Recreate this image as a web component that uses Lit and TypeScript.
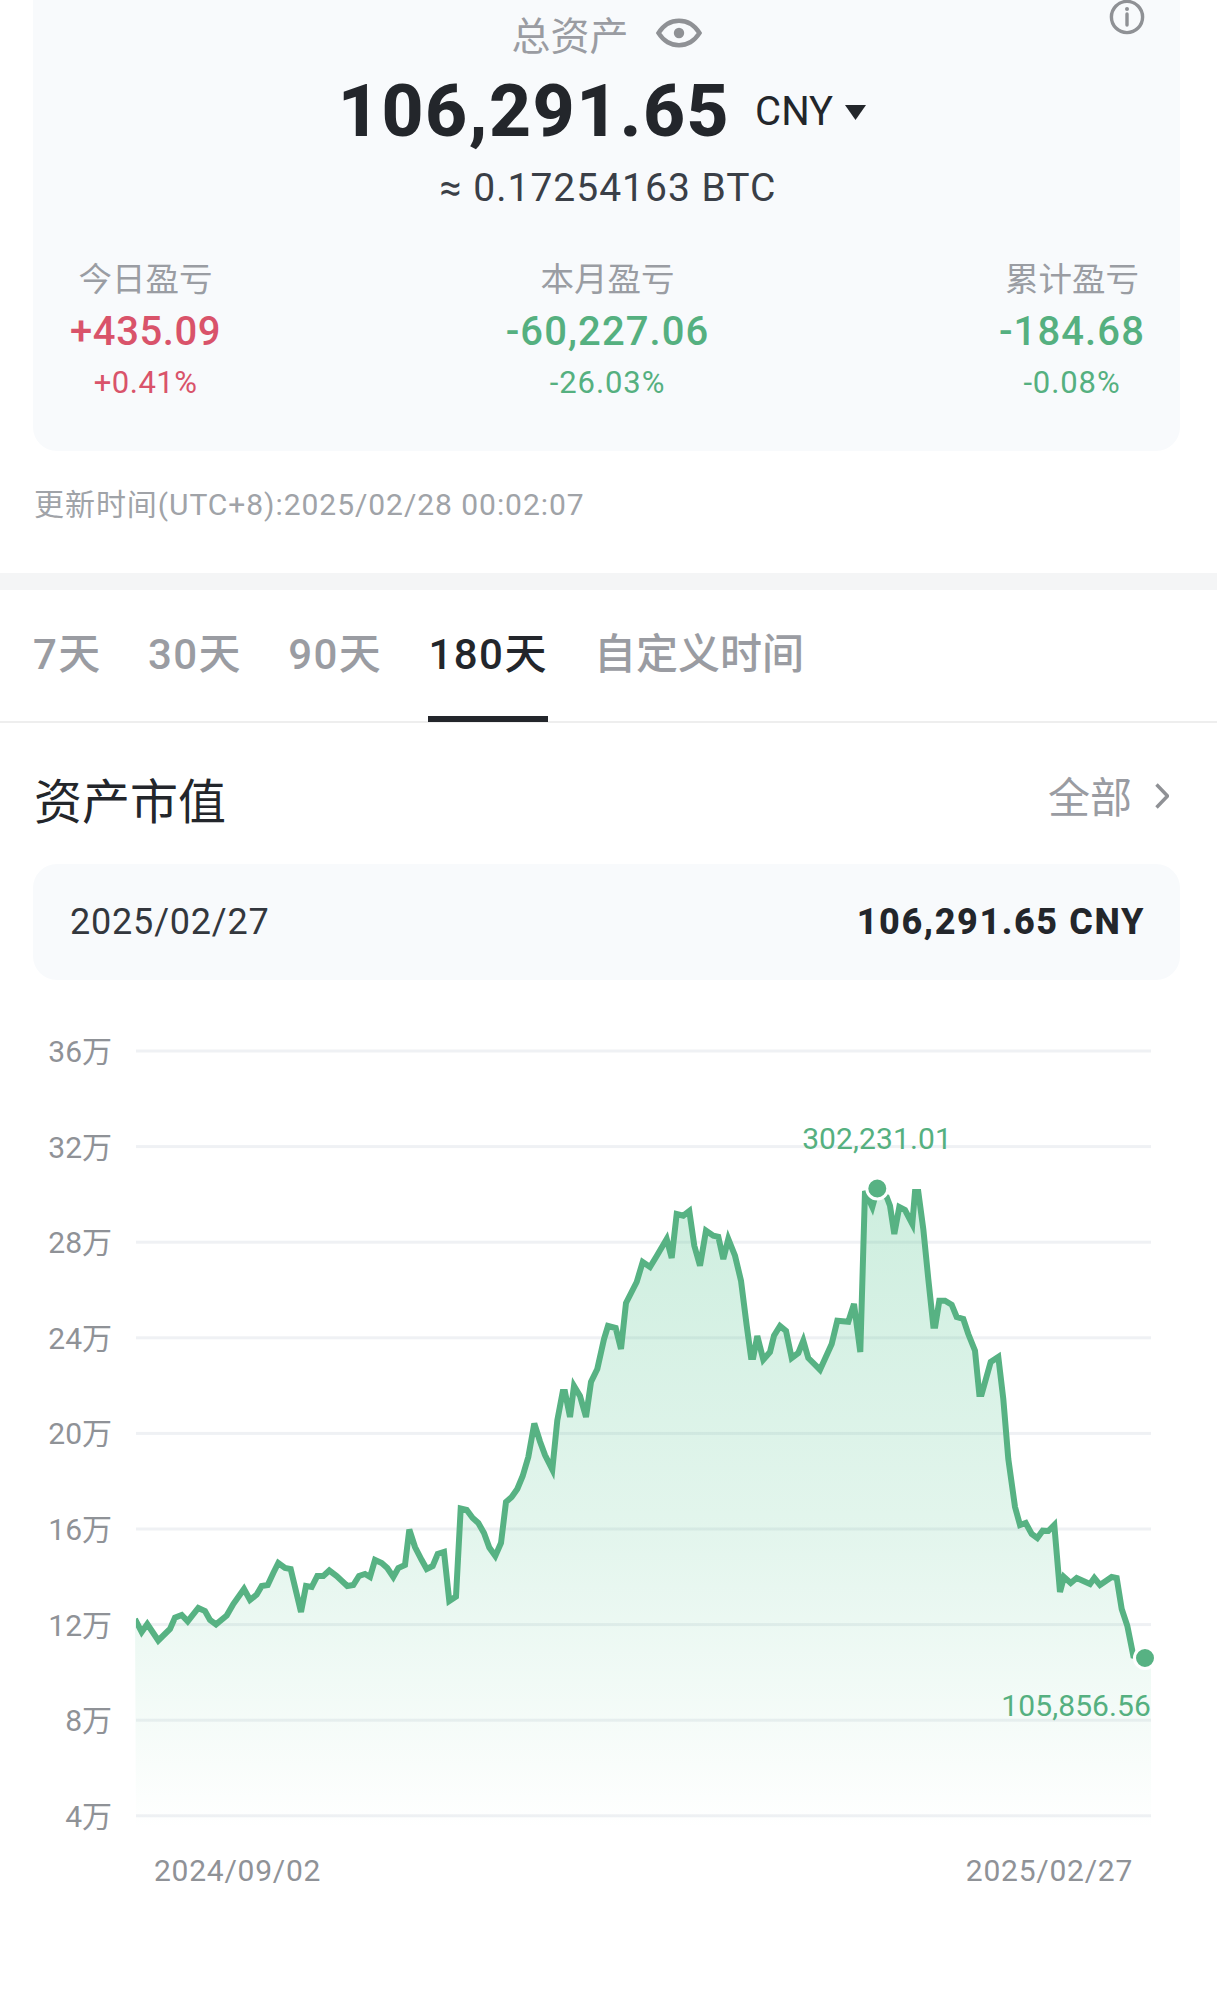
import { LitElement, html, css, svg } from 'lit';
import { customElement } from 'lit/decorators.js';
import { classMap } from 'lit/directives/class-map.js';

// chart points, in page pixels
const POINTS: [number, number][] = [
    [135, 1620], [141.7, 1633], [147.3, 1625], [158.3, 1641.5], [170, 1630], [175, 1618.6], [181.7, 1616], [187.7, 1622.4],
    [198.3, 1609], [205, 1612], [210, 1621], [216, 1625.4], [226.7, 1616.6], [233.3, 1605], [244, 1590], [250, 1601],
    [256.7, 1595.6], [261.7, 1587], [267.7, 1586], [273.3, 1574], [278.3, 1564], [285, 1569], [290.7, 1570], [301, 1613],
    [306, 1587], [311.7, 1588], [317.3, 1577], [323.3, 1577], [329.3, 1571.5], [336.7, 1577], [347.3, 1587], [353.3, 1586],
    [359, 1577], [365, 1575], [370, 1578], [375, 1561], [381.7, 1564], [387.3, 1569], [393.3, 1578], [398.3, 1569],
    [405, 1566], [409.3, 1530.5], [415, 1548], [421.7, 1561], [426.7, 1570], [432.7, 1567], [437.7, 1555], [444, 1553],
    [449.3, 1602], [456, 1597.5], [460.7, 1509.5], [466.7, 1511], [472.7, 1519], [478.3, 1524], [484, 1534], [489.3, 1548.5],
    [495.3, 1557], [501, 1544], [506, 1503], [511.7, 1498], [517.3, 1490], [522.7, 1477], [528.3, 1458], [534.3, 1424.5],
    [540, 1442.5], [545, 1456], [552.3, 1470.5], [557.3, 1421.5], [562.7, 1393], [565, 1393], [570, 1418], [574, 1387],
    [580, 1397], [586, 1418], [591, 1383], [597.3, 1370], [604, 1340], [608, 1327], [615.7, 1329], [621, 1350],
    [626, 1304], [636.7, 1283], [642.7, 1263], [650, 1268], [656.7, 1257], [666.7, 1240], [671.7, 1259], [676.7, 1215],
    [683.3, 1216.7], [689.3, 1212], [694.3, 1246.7], [700, 1266.7], [706, 1231.7], [713.3, 1236.7], [718.3, 1237.7], [723.3, 1260],
    [728.3, 1240], [735, 1256.7], [741, 1281.7], [746.7, 1326.7], [751, 1358], [753.3, 1358], [757.3, 1337], [763.3, 1360.7],
    [770, 1353], [774, 1336.7], [780, 1327], [786, 1332], [791.7, 1359], [798.3, 1354], [803.3, 1341.7], [808.3, 1359],
    [820, 1370.7], [831.7, 1345], [837.3, 1321.7], [848.3, 1322.7], [854, 1305], [860.3, 1353], [865, 1192], [872.3, 1208],
    [877.3, 1190], [886.7, 1198], [890, 1206.7], [894.3, 1235], [899.3, 1208], [905, 1211], [912.3, 1225], [915, 1193],
    [918.3, 1193], [923.3, 1230], [928.3, 1280], [933.3, 1326.7], [935.3, 1326.7], [939.3, 1301.7], [945, 1301.7], [951.7, 1305.7],
    [956.7, 1318], [963.3, 1320], [968.3, 1335], [975, 1351.7], [979.3, 1395], [981.7, 1395], [990.7, 1363], [998.3, 1358],
    [1003.3, 1400], [1008.3, 1460], [1015, 1508], [1020, 1526], [1025.7, 1524], [1031.7, 1535], [1037.3, 1539], [1042.7, 1531.7],
    [1048.3, 1532], [1054.3, 1526], [1060, 1593], [1064, 1578], [1070.7, 1584], [1076.7, 1579], [1090, 1585], [1094.3, 1579],
    [1100, 1586], [1111.7, 1578], [1116.7, 1579], [1121.7, 1610], [1127.3, 1626.7], [1133.3, 1656.7], [1145, 1659],
];

const GRID = ['36万', '32万', '28万', '24万', '20万', '16万', '12万', '8万', '4万'];
const GRID_TOP = 1052;
const GRID_STEP = 95.6;

const STATS = [
    { label: '今日盈亏', value: '+435.09', pct: '+0.41%', up: true },
    { label: '本月盈亏', value: '-60,227.06', pct: '-26.03%', up: false },
    { label: '累计盈亏', value: '-184.68', pct: '-0.08%', up: false },
];

const TABS = ['7天', '30天', '90天', '180天', '自定义时间'];

@customElement('app-root')
export class AppRoot extends LitElement {
    static get styles () {
        return css`
            :host {
                display: block;
                width: 1217px;
                height: 1994px;
                overflow: hidden;
                background: #fff;
                font-family: Roboto, "Noto Sans CJK SC", sans-serif;
                color: #23262b;
            }
            .summary {
                position: relative;
                height: 451px;
                margin: 0 37px 0 33px;
                padding-top: 8px;
                box-sizing: border-box;
                background: #f8fafc;
                border-radius: 0 0 24px 24px;
            }
            .info {
                position: absolute;
                top: -1px;
                right: 35px;
                width: 36px;
                height: 36px;
            }
            .total-label {
                display: flex;
                justify-content: center;
                align-items: center;
                gap: 27px;
                height: 50px;
                font-size: 39px;
                color: #9a9ca2;
            }
            .total-label svg {
                width: 46px;
                height: 30px;
            }
            .amount {
                display: flex;
                justify-content: center;
                align-items: center;
                height: 84px;
                margin-top: 11px;
                padding-right: 9px;
            }
            .amount b {
                font-size: 73px;
                font-weight: 800;
                letter-spacing: 1.5px;
                line-height: 84px;
            }
            .amount span {
                margin-left: 25px;
                font-size: 40px;
            }
            .amount svg {
                width: 21px;
                height: 15px;
                margin: 2px 0 0 12px;
            }
            .btc {
                margin-top: 10px;
                padding-left: 3px;
                height: 50px;
                line-height: 50px;
                text-align: center;
                font-size: 39px;
                letter-spacing: 1px;
                color: #3a3f47;
            }
            .stats {
                display: grid;
                grid-template-columns: auto 1fr auto;
                margin-top: 45px;
                padding: 0 35px 0 37px;
                text-align: center;
            }
            .stats > :nth-child(2) {
                padding-right: 5px;
            }
            .stat-label {
                height: 44px;
                line-height: 44px;
                font-size: 33.5px;
                color: #9a9da3;
            }
            .stat-value {
                height: 50px;
                line-height: 50px;
                margin-top: 5px;
                font-size: 40px;
                font-weight: 500;
                letter-spacing: 0.6px;
            }
            .stat-value.down {
                letter-spacing: 1.1px;
            }
            .stat-pct {
                height: 40px;
                line-height: 40px;
                margin-top: 6px;
                font-size: 31px;
                letter-spacing: 0.5px;
            }
            .stat-pct.down {
                letter-spacing: 0.9px;
            }
            .up { color: #d9536a; }
            .down { color: #55b080; }
            .updated {
                height: 122px;
                padding: 34px 0 0 34px;
                box-sizing: border-box;
                line-height: 40px;
                font-size: 30px;
                letter-spacing: 0.95px;
                color: #a0a3a8;
            }
            .band {
                height: 17px;
                background: #f4f5f6;
            }
            .tabs {
                display: flex;
                gap: 46px;
                padding: 0 33px;
                border-bottom: 2px solid #eeeeee;
            }
            .tab {
                padding: 42px 0 38px;
                border-bottom: 6px solid transparent;
                margin-bottom: -1px;
                line-height: 46px;
                font-size: 42px;
                letter-spacing: 1.5px;
                font-weight: 500;
                color: #9a9ca2;
            }
            .tab.wide {
                letter-spacing: 0;
            }
            .tab.active {
                color: #23262b;
                border-bottom-color: #23262b;
            }
            .heading {
                display: flex;
                justify-content: space-between;
                margin-top: 48px;
                padding: 0 48px 0 34px;
                height: 62px;
            }
            .heading h2 {
                margin: 2px 0 0;
                font-size: 48px;
                font-weight: 400;
                line-height: 60px;
                color: #23262b;
            }
            .all {
                display: flex;
                align-items: center;
                gap: 23px;
                height: 50px;
                font-size: 42px;
                color: #9a9ca2;
            }
            .all span {
                margin-top: -4px;
            }
            .all svg {
                width: 14px;
                height: 28px;
            }
            .picked {
                display: flex;
                justify-content: space-between;
                align-items: center;
                height: 116px;
                margin: 31px 37px 0 33px;
                padding: 0 35px 0 37px;
                background: #f8fafc;
                border-radius: 24px;
                font-size: 36px;
                color: #33373d;
            }
            .picked b {
                font-weight: 800;
                letter-spacing: 1.6px;
                color: #23262b;
            }
            .picked span {
                letter-spacing: 0.8px;
            }
            .chart {
                display: block;
                width: 1217px;
                height: 1013px;
            }
            .axis {
                font-size: 30px;
                fill: #8f9297;
            }
            .date {
                font-size: 30px;
                letter-spacing: 0.75px;
                fill: #8f9297;
            }
            .mark {
                font-size: 30px;
                letter-spacing: 0.1px;
                fill: #55b080;
            }
        `;
    }

    renderChart () {
        const line = POINTS.map(([x, y]) => `${x},${y}`).join(' ');
        const area = `M136,1830 L${line.split(' ').join(' L')} L1151,1661 L1151,1830 Z`;
        return html`
            <svg class="chart" viewBox="0 981 1217 1013">
                <defs>
                    <linearGradient id="fade" gradientUnits="userSpaceOnUse" x1="0" y1="1190" x2="0" y2="1830">
                        <stop offset="0" stop-color="#48c088" stop-opacity="0.27"></stop>
                        <stop offset="0.55" stop-color="#48c088" stop-opacity="0.15"></stop>
                        <stop offset="1" stop-color="#48c088" stop-opacity="0"></stop>
                    </linearGradient>
                    <clipPath id="plot"><rect x="136" y="1100" width="1015" height="760"></rect></clipPath>
                </defs>
                ${GRID.map((label, i) => {
                    const y = GRID_TOP + i * GRID_STEP;
                    return svg`
                        <rect x="136" y=${y - 1.5} width="1015" height="3" fill="#eff1f4"></rect>
                        <text class="axis" x="112" y=${y + 11} text-anchor="end">${label}</text>
                    `;
                })}
                <path d=${area} fill="url(#fade)"></path>
                <polyline points=${line} fill="none" stroke="#57b283" stroke-width="6" stroke-linejoin="miter" clip-path="url(#plot)"></polyline>
                <circle cx="877.3" cy="1189.5" r="10.5" fill="#57b283" stroke="#fff" stroke-width="3"></circle>
                <circle cx="1145" cy="1659" r="10.5" fill="#57b283" stroke="#fff" stroke-width="3"></circle>
                <text class="mark" x="877" y="1150" text-anchor="middle">302,231.01</text>
                <text class="mark" x="1151" y="1717" text-anchor="end">105,856.56</text>
                <text class="date" x="154" y="1882">2024/09/02</text>
                <text class="date" x="1133" y="1882" text-anchor="end">2025/02/27</text>
            </svg>
        `;
    }

    render () {
        return html`
            <section class="summary">
                <svg class="info" viewBox="0 0 36 36" fill="none" stroke="#8f9195" stroke-width="3.4">
                    <circle cx="18" cy="18" r="15.6"></circle>
                    <path d="M18 15v11" stroke-linecap="round"></path>
                    <circle cx="18" cy="10" r="2" fill="#8f9195" stroke="none"></circle>
                </svg>
                <div class="total-label">
                    <span>总资产</span>
                    <svg viewBox="0 0 46 30" fill="none">
                        <path d="M2.5 15C8 6.5 15 2.8 23 2.8S38 6.5 43.5 15C38 23.5 31 27.2 23 27.2S8 23.5 2.5 15Z" stroke="#8f9195" stroke-width="4.4"></path>
                        <circle cx="23" cy="15" r="5.2" fill="#8f9195"></circle>
                    </svg>
                </div>
                <div class="amount">
                    <b>106,291.65</b>
                    <span>CNY</span>
                    <svg viewBox="0 0 21 15"><path d="M0 0H21L10.5 15Z" fill="#23262b"></path></svg>
                </div>
                <div class="btc">≈ 0.17254163 BTC</div>
                <div class="stats">
                    ${STATS.map(s => html`
                        <div>
                            <div class="stat-label">${s.label}</div>
                            <div class="stat-value ${s.up ? 'up' : 'down'}">${s.value}</div>
                            <div class="stat-pct ${s.up ? 'up' : 'down'}">${s.pct}</div>
                        </div>
                    `)}
                </div>
            </section>
            <div class="updated">更新时间(UTC+8):2025/02/28 00:02:07</div>
            <div class="band"></div>
            <nav class="tabs">
                ${TABS.map(t => html`<div class=${classMap({ tab: true, active: t === '180天', wide: t.length > 4 })}>${t}</div>`)}
            </nav>
            <div class="heading">
                <h2>资产市值</h2>
                <div class="all">
                    <span>全部</span>
                    <svg viewBox="0 0 14 28" fill="none">
                        <path d="M1.5 2.5L12.5 14L1.5 25.5" stroke="#8f9195" stroke-width="3.4"></path>
                    </svg>
                </div>
            </div>
            <div class="picked">
                <span>2025/02/27</span>
                <b>106,291.65 CNY</b>
            </div>
            ${this.renderChart()}
        `;
    }
}
